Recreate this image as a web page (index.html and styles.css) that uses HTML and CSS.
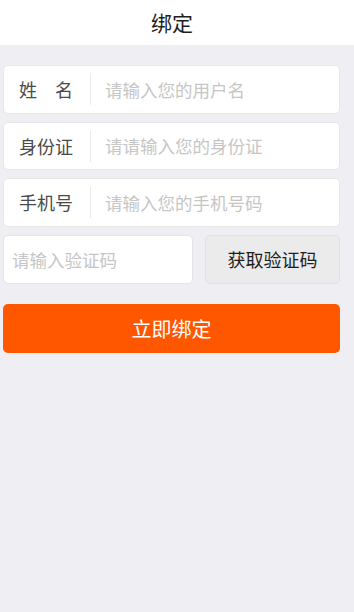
FILE: index.html
```html
<!DOCTYPE html>
<html lang="zh-CN">
<head>
<meta charset="utf-8">
<link rel="stylesheet" href="styles.css">
</head>
<body>
<header class="topbar"><h1 class="title">绑定</h1></header>
<main class="form">
  <div class="field">
    <span class="label">姓　名</span>
    <span class="sep"></span>
    <span class="ph">请输入您的用户名</span>
  </div>
  <div class="field">
    <span class="label">身份证</span>
    <span class="sep"></span>
    <span class="ph">请请输入您的身份证</span>
  </div>
  <div class="field">
    <span class="label">手机号</span>
    <span class="sep"></span>
    <span class="ph">请输入您的手机号码</span>
  </div>
  <div class="code-row">
    <div class="code-input"><span class="ph">请输入验证码</span></div>
    <button class="code-btn">获取验证码</button>
  </div>
  <button class="submit">立即绑定</button>
</main>
</body>
</html>
```
FILE: styles.css
```css
* { box-sizing: border-box; }
html, body { margin: 0; padding: 0; }
body {
  width: 354px;
  height: 612px;
  background: #efeef2;
  font-family: "Noto Sans CJK SC", "Noto Sans", sans-serif;
  overflow: hidden;
}
.topbar {
  height: 45px;
  background: #ffffff;
  display: flex;
  align-items: center;
  justify-content: center;
  padding-right: 10px;
}
.title {
  margin: 0;
  font-size: 21px;
  font-weight: 400;
  color: #1e1e1e;
  line-height: 1;
}
.form {
  padding: 20px 14px 0 3px;
  display: flex;
  flex-direction: column;
  gap: 8px;
}
.field {
  height: 48.5px;
  background: #ffffff;
  border: 1px solid #e8e8ea;
  border-radius: 5px;
  display: flex;
  align-items: center;
  padding-left: 15px;
}
.label {
  font-size: 18px;
  color: #4a4a4a;
  width: 54px;
  white-space: nowrap;
}
.sep {
  width: 1px;
  height: 32px;
  background: #ececec;
  margin-left: 17px;
  margin-right: 14px;
}
.ph {
  font-size: 17.5px;
  color: #c6c6c6;
  white-space: nowrap;
}
.code-row {
  display: flex;
  gap: 12px;
  height: 49px;
}
.code-input {
  width: 190px;
  background: #ffffff;
  border: 1px solid #e4e4e6;
  border-radius: 5px;
  display: flex;
  align-items: center;
  padding-left: 8px;
}
.code-btn {
  flex: 1;
  background: #ebebeb;
  border: 1px solid #e2e2e2;
  border-radius: 5px;
  font-family: inherit;
  font-size: 18px;
  color: #1e1e1e;
  padding: 0;
}
.submit {
  margin-top: 12.5px;
  height: 49px;
  background: #ff5700;
  border: none;
  border-radius: 5px;
  color: #ffffff;
  font-family: inherit;
  font-size: 20px;
  padding: 0;
}
```
